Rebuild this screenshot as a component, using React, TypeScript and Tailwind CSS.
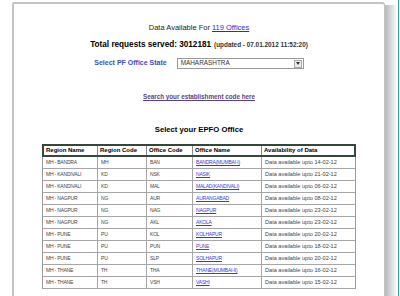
const ROWS = [
  ["MH - BANDRA", "MH", "BAN", "BANDRA(MUMBAI-I)", "14-02-12"],
  ["MH - KANDIVALI", "KD", "NSK", "NASIK", "21-02-12"],
  ["MH - KANDIVALI", "KD", "MAL", "MALAD(KANDIVALI)", "06-02-12"],
  ["MH - NAGPUR", "NG", "AUR", "AURANGABAD", "08-02-12"],
  ["MH - NAGPUR", "NG", "NAG", "NAGPUR", "23-02-12"],
  ["MH - NAGPUR", "NG", "AKL", "AKOLA", "23-02-12"],
  ["MH - PUNE", "PU", "KOL", "KOLHAPUR", "20-02-12"],
  ["MH - PUNE", "PU", "PUN", "PUNE", "18-02-12"],
  ["MH - PUNE", "PU", "SLP", "SOLHAPUR", "20-02-12"],
  ["MH - THANE", "TH", "THA", "THANE(MUMBAI-II)", "16-02-12"],
  ["MH - THANE", "TH", "VSH", "VASHI", "15-02-12"],
];

const HEAD = ["Region Name", "Region Code", "Office Code", "Office Name", "Availability of Data"];
const HEAD_W = ["w-[54px]", "w-[49px]", "w-[46px]", "w-[69px]", "flex-1"];
const BODY_W = ["w-[55px]", "w-[49px]", "w-[46px]", "w-[69px]", "flex-1"];

export default function App() {
  return (
    <div
      className="w-[400px] h-[296px] overflow-hidden bg-white flex"
      style={{ fontFamily: '"Liberation Sans", Arial, sans-serif' }}
    >
      <div className="w-[12px] shrink-0" />

      {/* page panel */}
      <div className="w-[373px] shrink-0 mt-[2px] border-l-2 border-t-2 border-r border-[#c4c4c4] rounded-tl-[2px] rounded-tr-[3px] flex flex-col items-center">
        <div className="mt-[19px] h-[10px] leading-[10px] text-[7.5px] text-[#222]">
          Data Available For <span className="text-[#2b2bd6] underline">119 Offices</span>
        </div>

        <div className="mt-[6px] h-[12px] leading-[12px] flex items-baseline gap-[3px] text-black">
          <span className="text-[8.2px] font-bold">Total requests served: 3012181</span>
          <span className="text-[6.4px] font-bold text-[#333]">(updated - 07.01.2012 11:52:20)</span>
        </div>

        <div className="mt-[7px] h-[11px] flex items-center gap-[10px]">
          <span className="text-[7px] font-bold text-[#3b4cd0]">Select PF Office State</span>
          <div className="w-[127px] h-[11px] border border-[#9a9a9a] bg-white flex items-center justify-between pl-[3px] pr-[1px]">
            <span className="text-[6.4px] text-[#333] leading-none">MAHARASHTRA</span>
            <div className="w-[8px] h-[8px] border border-[#a8a8a8] bg-[#ececec] flex items-center justify-center">
              <svg width="4" height="3" viewBox="0 0 4 3">
                <path d="M0 0 L4 0 L2 3 Z" fill="#333" />
              </svg>
            </div>
          </div>
        </div>

        <div className="mt-[23px] h-[10px] leading-[10px] text-[6.3px] font-bold text-[#5a3f8c] underline">
          Search your establishment code here
        </div>

        <div className="mt-[22px] h-[12px] leading-[12px] text-[7.7px] font-bold text-black">
          Select your EPFO Office
        </div>

        <div className="mt-[8px] w-[314px] flex flex-col">
          <div className="flex h-[13px] border-2 border-[#34473a]">
            {HEAD.map((h, i) => (
              <div
                key={h}
                className={`${HEAD_W[i]} ${i < 4 ? "border-r border-[#8c8c8c]" : ""} flex items-center pl-[2px] text-[6px] font-bold text-black`}
              >
                {h}
              </div>
            ))}
          </div>
          <div className="border-x border-[#9a9a9a]">
            {ROWS.map((r, ri) => (
              <div key={ri} className="flex h-[12px] border-b border-[#a6a6a6]">
                {r.map((c, i) => (
                  <div
                    key={i}
                    className={`${BODY_W[i]} ${i < 4 ? "border-r border-[#a6a6a6]" : ""} flex items-center pl-[3px] text-[#444] ${i === 4 ? "text-[5.6px]" : "text-[5px] tracking-[-0.2px]"}`}
                  >
                    {i === 3 ? (
                      <span className={`underline ${c === "PUNE" ? "text-[#6a3b9c]" : "text-[#3a3ad8]"}`}>{c}</span>
                    ) : i === 4 ? (
                      `Data available upto ${c}`
                    ) : (
                      c
                    )}
                  </div>
                ))}
              </div>
            ))}
          </div>
        </div>
      </div>

      {/* shadow and frame edge */}
      <div className="w-[11px] shrink-0 mt-[5px] bg-gradient-to-r from-[#b8b8b8] to-[#f4f4f4]" />
      <div className="w-[2px] shrink-0" />
      <div className="w-[1px] shrink-0 bg-[#4a98a6]" />
      <div className="w-[1px] shrink-0 bg-[#dfeeee]" />
    </div>
  );
}
